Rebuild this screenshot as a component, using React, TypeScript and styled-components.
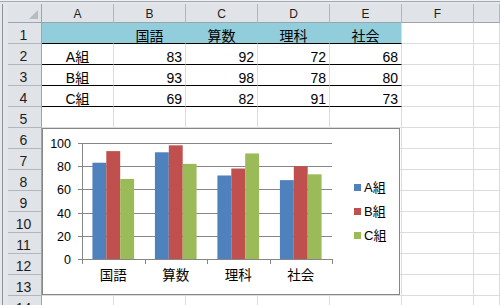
import React from "react";
import styled, { createGlobalStyle } from "styled-components";

const GlobalStyle = createGlobalStyle`
  html, body {
    margin: 0;
    padding: 0;
    background: #ffffff;
  }
  body {
    font-family: "Liberation Sans", "Noto Sans CJK JP", sans-serif;
    color: #000;
  }
`;

const LETTERS = ["A", "B", "C", "D", "E", "F", ""];
const SUBJECTS = ["国語", "算数", "理科", "社会"];
const GROUPS = [
  { name: "A組", color: "#4f81bd", scores: [83, 92, 72, 68] },
  { name: "B組", color: "#c0504d", scores: [93, 98, 78, 80] },
  { name: "C組", color: "#9bbb59", scores: [69, 82, 91, 73] },
];
const ROW_COUNT = 14;
const HEADER_FILL = "#92cddc";
const GRID = "#dadcdd";

type Align = "left" | "center" | "right";

const App: React.FC = () => {
  const rows = Array.from({ length: ROW_COUNT }, (_, i) => i + 1);

  const cellFor = (row: number, col: number) => {
    const inTable = col < 5;
    if (row === 1 && inTable) {
      return (
        <Cell key={col} $fill={HEADER_FILL} $right={col === 4 ? GRID : HEADER_FILL} $bottom="#000" $align="center">
          {col === 0 ? "" : SUBJECTS[col - 1]}
        </Cell>
      );
    }
    if (row >= 2 && row <= 4 && inTable) {
      const group = GROUPS[row - 2];
      return (
        <Cell key={col} $bottom="#000" $align={col === 0 ? "center" : "right"}>
          {col === 0 ? group.name : group.scores[col - 1]}
        </Cell>
      );
    }
    return <Cell key={col} />;
  };

  return (
    <>
      <GlobalStyle />
      <Window>
        <TopStrip />
        <Body>
          <LeftStrip />
          <Sheet>
            <Corner>
              <SelectAll />
            </Corner>
            {LETTERS.map((letter, i) => (
              <ColumnHeader key={i}>{letter}</ColumnHeader>
            ))}
            {rows.map((row) => (
              <React.Fragment key={row}>
                <RowHeader>{row}</RowHeader>
                {LETTERS.map((_, col) => cellFor(row, col))}
              </React.Fragment>
            ))}
            <ScoreChart />
          </Sheet>
        </Body>
      </Window>
    </>
  );
};

const ScoreChart: React.FC = () => {
  const left = 39;
  const right = 289;
  const top = 14;
  const bottom = 130;
  const plotHeight = bottom - top;
  const band = (right - left) / SUBJECTS.length;
  const barWidth = band / 4.5;
  const ticks = [0, 20, 40, 60, 80, 100];
  const yOf = (v: number) => bottom - (v / 100) * plotHeight;

  return (
    <Chart>
      <Plot width={300} height={165} viewBox="0 0 300 165">
        {ticks.map((t) => {
          const y = Math.round(yOf(t)) + 0.5;
          return <line key={t} x1={left - 4} x2={right} y1={y} y2={y} stroke="#868686" strokeWidth={1} />;
        })}
        {SUBJECTS.map((_, k) =>
          GROUPS.map((g, s) => {
            const h = (g.scores[k] / 100) * plotHeight;
            return (
              <rect
                key={`${k}-${s}`}
                x={left + k * band + 0.75 * barWidth + s * barWidth}
                y={bottom - h}
                width={barWidth}
                height={h}
                fill={g.color}
              />
            );
          })
        )}
        <line x1={left + 0.5} x2={left + 0.5} y1={top} y2={bottom + 1} stroke="#868686" strokeWidth={1} />
        <line x1={left - 4} x2={right} y1={bottom + 0.5} y2={bottom + 0.5} stroke="#868686" strokeWidth={1} />
        {SUBJECTS.map((_, k) => (
          <line
            key={`t${k}`}
            x1={Math.round(left + k * band) + 0.5}
            x2={Math.round(left + k * band) + 0.5}
            y1={bottom}
            y2={bottom + 5}
            stroke="#868686"
            strokeWidth={1}
          />
        ))}
        <line x1={right + 0.5} x2={right + 0.5} y1={bottom} y2={bottom + 5} stroke="#868686" strokeWidth={1} />
        {ticks.map((t) => (
          <AxisText key={`l${t}`} x={28} y={Math.round(yOf(t)) + 5} textAnchor="end">
            {t}
          </AxisText>
        ))}
        {SUBJECTS.map((name, k) => (
          <CategoryText key={name} x={left + k * band + band / 2} y={151} textAnchor="middle">
            {name}
          </CategoryText>
        ))}
      </Plot>
      <Legend>
        {GROUPS.map((g) => (
          <LegendItem key={g.name}>
            <Swatch $color={g.color} />
            {g.name}
          </LegendItem>
        ))}
      </Legend>
    </Chart>
  );
};

const Window = styled.div`
  display: flex;
  flex-direction: column;
  width: 500px;
  height: 305px;
  overflow: hidden;
  background: #ffffff;
`;

const TopStrip = styled.div`
  flex: 0 0 4px;
  background: linear-gradient(to bottom, #eef0f2 0 1px, #a4aab1 1px 2px, #e3e6ea 2px);
`;

const Body = styled.div`
  display: flex;
  flex: 1;
  min-height: 0;
`;

const LeftStrip = styled.div`
  flex: 0 0 8px;
  background: linear-gradient(to right, #e6e8eb 0 2px, #8e949b 2px 3px, #e3e6ea 3px);
`;

const Sheet = styled.div`
  position: relative;
  flex: 1;
  display: grid;
  grid-template-columns: 34px repeat(6, 72px) 1fr;
  grid-template-rows: 19px;
  grid-auto-rows: 21px;
  align-content: start;
  overflow: hidden;
`;

const HeaderBase = styled.div`
  box-sizing: border-box;
  display: flex;
  justify-content: center;
  background: #e0e3e8;
  color: #1e1e1e;
  white-space: nowrap;
`;

const Corner = styled(HeaderBase)`
  position: relative;
  border-right: 1px solid #9ea4ab;
  border-bottom: 1px solid #9ea4ab;
`;

const SelectAll = styled.span`
  position: absolute;
  right: 3px;
  bottom: 3px;
  width: 0;
  height: 0;
  border-left: 9px solid transparent;
  border-bottom: 9px solid #b7bcc2;
`;

const ColumnHeader = styled(HeaderBase)`
  align-items: center;
  border-right: 1px solid #b2b7bd;
  border-bottom: 1px solid #9ea4ab;
  font-size: 12px;
  line-height: 12px;
  padding-top: 1px;
`;

const RowHeader = styled(HeaderBase)`
  align-items: flex-end;
  border-right: 1px solid #9ea4ab;
  border-bottom: 1px solid #b2b7bd;
  font-size: 14px;
  line-height: 14px;
  padding: 0 2px 1px 0;
`;

const Cell = styled.div<{ $fill?: string; $right?: string; $bottom?: string; $align?: Align }>`
  box-sizing: border-box;
  display: flex;
  align-items: flex-end;
  justify-content: ${(p) =>
    p.$align === "right" ? "flex-end" : p.$align === "center" ? "center" : "flex-start"};
  padding: 0 3px 0 3px;
  background: ${(p) => p.$fill ?? "#ffffff"};
  border-right: 1px solid ${(p) => p.$right ?? GRID};
  border-bottom: 1px solid ${(p) => p.$bottom ?? GRID};
  font-size: 14px;
  line-height: 14px;
  white-space: nowrap;
  overflow: hidden;
`;

const Chart = styled.div`
  position: absolute;
  left: 34px;
  top: 124px;
  width: 358px;
  height: 167px;
  box-sizing: border-box;
  border: 1px solid #868686;
  background: #ffffff;
  display: flex;
  align-items: center;
`;

const Plot = styled.svg`
  flex: 0 0 300px;
  display: block;
  align-self: stretch;
`;

const AxisText = styled.text`
  font-family: "Liberation Sans", sans-serif;
  font-size: 12.5px;
  fill: #000;
`;

const CategoryText = styled.text`
  font-family: "Liberation Sans", "Noto Sans CJK JP", sans-serif;
  font-size: 13.5px;
  fill: #000;
`;

const Legend = styled.ul`
  list-style: none;
  margin: 0;
  padding: 0 0 0 11px;
  display: flex;
  flex-direction: column;
`;

const LegendItem = styled.li`
  display: flex;
  align-items: center;
  gap: 3px;
  height: 24px;
  font-size: 13px;
  line-height: 13px;
`;

const Swatch = styled.span<{ $color: string }>`
  width: 7px;
  height: 7px;
  background: ${(p) => p.$color};
`;

export default App;
